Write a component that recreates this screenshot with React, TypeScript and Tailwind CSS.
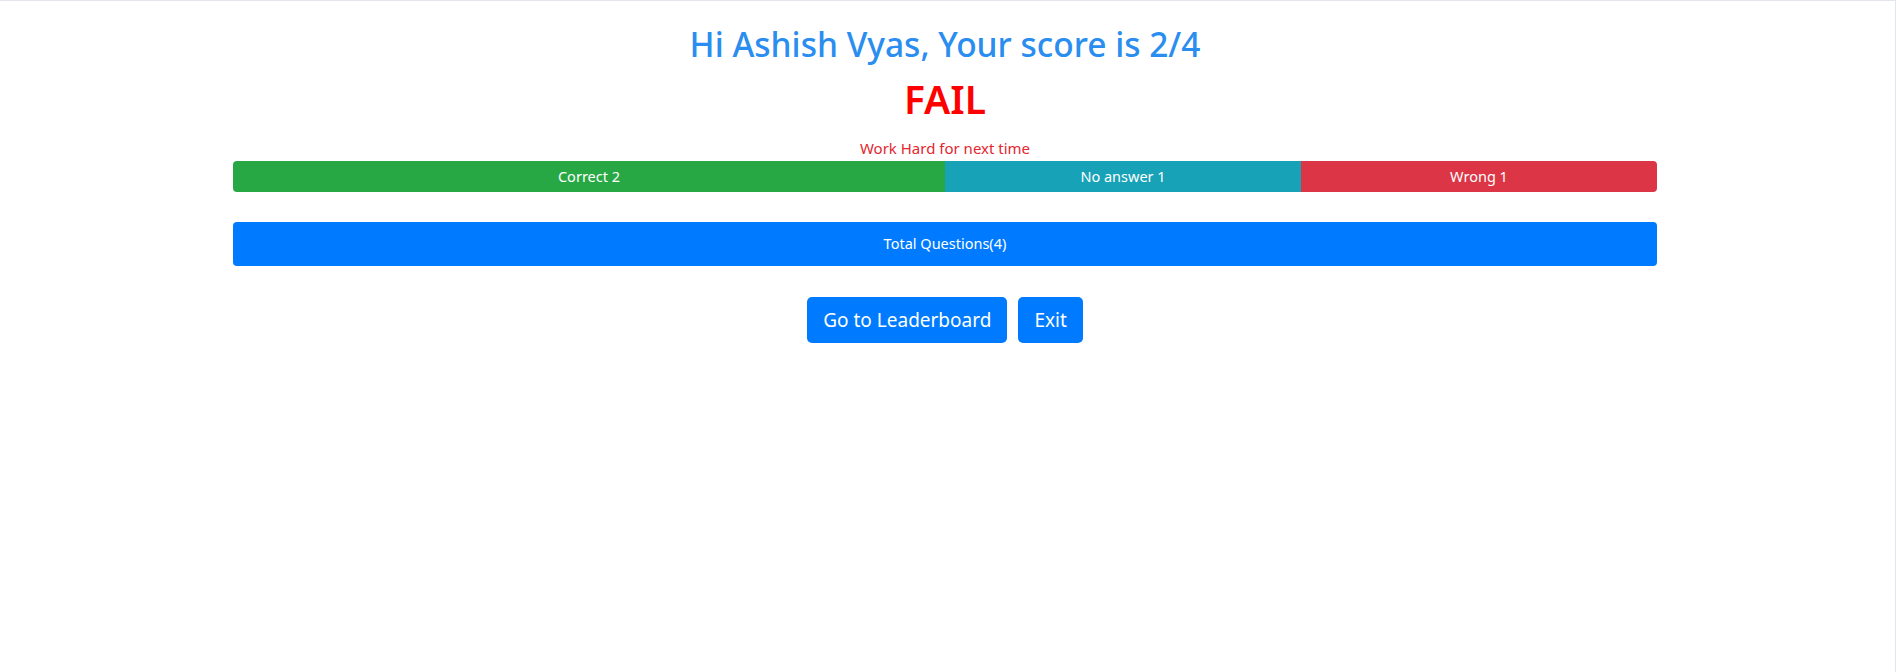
export default function App() {
  const correct = 2
  const noAnswer = 1
  const wrong = 1
  const total = 4

  return (
    <div className="min-h-[672px] w-full bg-white border-t border-r border-[#e4e6ee] font-['Noto_Sans',sans-serif]">
      <div className="w-[1890px] text-center">
        <h2 className="pt-[23px] text-[33.5px] leading-[1.2] font-medium text-[#2a8df0]">
          Hi Ashish Vyas, Your score is {correct}/{total}
        </h2>
        <h1 className="mt-[12px] text-[39px] leading-[1.2] font-semibold text-[#ff0000]">FAIL</h1>

        <div className="mx-auto w-[1424px]">
          <p className="mt-[13px] text-[15px] leading-6 text-[#e3262f]">Work Hard for next time</p>

          <div className="mt-[1px] flex h-[31px] overflow-hidden rounded-[4px] text-[14.5px] text-white">
            <div
              className="flex items-center justify-center bg-[#28a745]"
              style={{ width: `${(correct / total) * 100}%` }}
            >
              Correct {correct}
            </div>
            <div
              className="flex items-center justify-center bg-[#17a2b8]"
              style={{ width: `${(noAnswer / total) * 100}%` }}
            >
              No answer {noAnswer}
            </div>
            <div
              className="flex items-center justify-center bg-[#dc3545]"
              style={{ width: `${(wrong / total) * 100}%` }}
            >
              Wrong {wrong}
            </div>
          </div>

          <div className="mt-[30px] flex h-[44px] items-center justify-center rounded-[4px] bg-[#007bff] text-[14.5px] text-white">
            Total Questions({total})
          </div>

          <div className="mt-[31px] flex justify-center gap-[11px]">
            <button className="h-[46px] rounded-[5px] bg-[#007bff] px-4 text-[19px] text-white">
              Go to Leaderboard
            </button>
            <button className="h-[46px] rounded-[5px] bg-[#007bff] px-4 text-[19px] text-white">
              Exit
            </button>
          </div>
        </div>
      </div>
    </div>
  )
}
